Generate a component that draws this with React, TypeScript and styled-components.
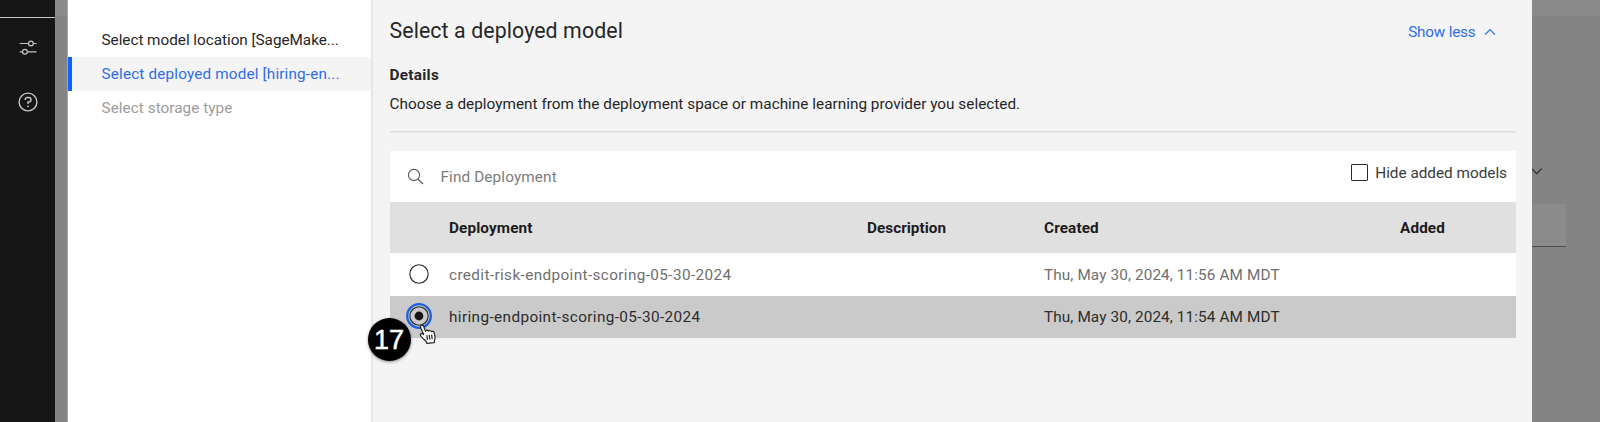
import React from "react";
import styled, { createGlobalStyle } from "styled-components";

const GlobalStyle = createGlobalStyle`
  *, *::before, *::after { box-sizing: border-box; }
  body {
    margin: 0;
    overflow: hidden;
    background: #848484;
    color: #262626;
    font-family: Roboto, "Noto Sans", sans-serif;
    font-size: 15.3px;
    line-height: 20px;
  }
  svg { display: block; }
`;

const Page = styled.div`
  display: flex;
  width: 1600px;
  height: 422px;
  overflow: hidden;
`;

const Rail = styled.nav`
  width: 55px;
  flex: none;
  display: flex;
  flex-direction: column;
  align-items: center;
  background: #161616;
  padding-left: 1px;
`;

const RailRule = styled.div`
  width: 55px;
  height: 1px;
  margin: 17px 0 20px -1px;
  background: #c6c6c6;
`;

const RailButton = styled.div<{ $gap?: number }>`
  width: 20px;
  height: 20px;
  margin-bottom: ${(p) => p.$gap ?? 0}px;
`;

const Backdrop = styled.div`
  flex: 1;
  display: flex;
  padding-left: 12px;
  background: linear-gradient(#8a8a8a 16px, #848484 16px);
`;

const Modal = styled.main`
  width: 1465px;
  flex: none;
  display: flex;
  background: #f4f4f4;
  border-left: 1px solid #a9a9a9;
`;

const Steps = styled.aside`
  width: 305px;
  flex: none;
  padding-top: 23px;
  background: #fff;
  border-right: 2px solid #e6e6e6;
`;

const Step = styled.div<{ $state: "done" | "active" | "pending"; $track: number }>`
  height: 34px;
  padding-left: 29.5px;
  border-left: 4px solid ${(p) => (p.$state === "active" ? "#0f62fe" : "transparent")};
  background: ${(p) => (p.$state === "active" ? "#f4f4f4" : "transparent")};
  color: ${(p) => ({ done: "#262626", active: "#2f6ee6", pending: "#9c9c9c" })[p.$state]};
  line-height: 35px;
  letter-spacing: ${(p) => p.$track}px;
  white-space: nowrap;
`;

const Content = styled.section`
  flex: 1;
  display: flex;
  flex-direction: column;
  padding: 15px 16.5px 0 16.5px;
`;

const TitleBar = styled.header`
  display: flex;
  justify-content: space-between;
  height: 50px;
`;

const Title = styled.h1`
  margin: 0;
  font-size: 21.3px;
  font-weight: 400;
  line-height: 31px;
  letter-spacing: 0.11px;
`;

const ShowLess = styled.div`
  display: flex;
  align-items: center;
  gap: 8px;
  height: 34px;
  padding-right: 20px;
  color: #2f6ee6;
  letter-spacing: -0.2px;
`;

const DetailsHeading = styled.h2`
  margin: 0;
  font-size: 15.3px;
  font-weight: 700;
  line-height: 21px;
  letter-spacing: 0.3px;
`;

const Details = styled.p`
  margin: 7px 0 0;
  line-height: 22px;
  letter-spacing: 0.025px;
`;

const Divider = styled.hr`
  width: 100%;
  height: 2px;
  margin: 16px 0 18px;
  border: 0;
  background: linear-gradient(#dcdcdc 50%, #e9e9e9 50%);
`;

const Toolbar = styled.div`
  display: flex;
  justify-content: space-between;
  height: 51px;
  padding: 0 8.5px 0 17px;
  background: #fff;
`;

const Search = styled.div`
  display: flex;
  align-items: center;
  gap: 17px;
  color: #7c7c7c;
  letter-spacing: 0.13px;
`;

const HideAdded = styled.label`
  display: flex;
  align-items: center;
  gap: 7px;
  height: 43px;
  color: #3a3a3a;
`;

const CheckBox = styled.span`
  width: 17px;
  height: 17px;
  border: 1px solid #2b2b2b;
  border-radius: 1px;
`;

const Row = styled.div<{ $tone: "head" | "plain" | "selected" }>`
  display: grid;
  grid-template-columns: 59.5px 418px 177px 356px 1fr;
  align-items: center;
  height: ${(p) => (p.$tone === "head" ? 51 : 42.5)}px;
  padding-top: ${(p) => (p.$tone === "head" ? 0 : 1)}px;
  background: ${(p) => ({ head: "#e0e0e0", plain: "#fff", selected: "#cacaca" })[p.$tone]};
  color: ${(p) => ({ head: "#1c1c1c", plain: "#6f6f6f", selected: "#2c2c2c" })[p.$tone]};
  font-weight: ${(p) => (p.$tone === "head" ? 700 : 400)};
`;

const Cell = styled.span<{ $track?: number }>`
  letter-spacing: ${(p) => p.$track ?? 0.12}px;
  white-space: nowrap;
`;

const RadioCell = styled.span`
  position: relative;
  padding-left: 15.5px;
`;

const Radio = styled.svg`
  margin-top: -2px;
`;

const Pointer = styled.svg`
  position: absolute;
  left: 28px;
  top: 20px;
`;

const Callout = styled.div`
  position: absolute;
  left: -22px;
  top: 13.5px;
  width: 43px;
  height: 43px;
  border-radius: 50%;
  background: #000;
  box-shadow: 0 1px 3px rgba(0, 0, 0, 0.45);
  color: #fff;
  font: 27px/44px "Liberation Sans", sans-serif;
  -webkit-text-stroke: 0.5px #fff;
  text-align: center;
`;

const Behind = styled.div`
  flex: 1;
  padding-top: 167px;
  overflow: hidden;
`;

const BehindField = styled.div`
  width: 34px;
  height: 43px;
  margin-top: 28px;
  background: #8b8b8b;
  border-bottom: 1px solid #4c4c4c;
`;

function RadioMark({ checked }: { checked?: boolean }) {
  return (
    <Radio width="28" height="28" viewBox="0 0 28 28" fill="none">
      {checked && <circle cx="14" cy="14" r="11.8" stroke="#1b5fe4" strokeWidth="2.3" />}
      <circle cx="14" cy="14" r="9.2" stroke="#262626" strokeWidth="1.1" />
      {checked && <circle cx="14" cy="14" r="4.4" fill="#161616" />}
    </Radio>
  );
}

function HandPointer() {
  return (
    <Pointer width="20" height="21" viewBox="0 0 20 21">
      <path
        d="M3 1.6c1-.7 2.2-.3 2.7.8L7.5 7.2c.4-1.3 2.4-1.4 2.9 0 .7-1.1 2.5-.9 2.9.5.9-.8 2.5-.4 2.8.9l.9 3.8c.4 1.8-.1 3-.5 4.1l-.3 2.2-7.4.6-.7-1.9c-1.4-1.5-2.9-2.5-4.3-4.3-.8-1.1-2-2-1.4-3 .6-1 2.2-.6 3.3.5L2.6 3.6c-.3-.8-.2-1.5.4-2z"
        fill="#fff"
        stroke="#222"
        strokeWidth="1.2"
        strokeLinejoin="round"
      />
      <path d="M8.8 11.2l.7 4.6M11.2 10.9l.7 4.6M13.6 10.6l.6 4.5" stroke="#222" strokeWidth="1.2" />
    </Pointer>
  );
}

export default function App() {
  return (
    <>
      <GlobalStyle />
      <Page>
        <Rail>
          <RailRule />
          <RailButton $gap={33.5}>
            <svg width="20" height="20" viewBox="0 0 20 20" fill="none" stroke="#c6c6c6" strokeWidth="1.2">
              <path d="M1.7 5.5H10.3M15.5 5.5H18.5M1.7 13.8H4.3M9.5 13.8H18.5" />
              <circle cx="12.9" cy="5.5" r="2.4" />
              <circle cx="6.9" cy="13.8" r="2.4" />
            </svg>
          </RailButton>
          <RailButton>
            <svg width="20" height="20" viewBox="0 0 20 20" fill="none" stroke="#c6c6c6" strokeWidth="1.4">
              <circle cx="10" cy="10" r="8.9" />
              <path d="M7.2 8V7.6a2.1 2.1 0 0 1 2.1-2.1h1.5a2.2 2.2 0 0 1 0 4.4H10v2" />
              <circle cx="10" cy="14.3" r=".9" fill="#c6c6c6" stroke="none" />
            </svg>
          </RailButton>
        </Rail>
        <Backdrop>
          <Modal>
            <Steps>
              <Step $state="done" $track={-0.03}>Select model location [SageMake...</Step>
              <Step $state="active" $track={0.16}>Select deployed model [hiring-en...</Step>
              <Step $state="pending" $track={0.05}>Select storage type</Step>
            </Steps>
            <Content>
              <TitleBar>
                <Title>Select a deployed model</Title>
                <ShowLess>
                  Show less
                  <svg width="12" height="8" viewBox="0 0 12 8" fill="none" stroke="#2f6ee6" strokeWidth="1.3">
                    <path d="M1 6.6L6 1.6L11 6.6" />
                  </svg>
                </ShowLess>
              </TitleBar>
              <DetailsHeading>Details</DetailsHeading>
              <Details>
                Choose a deployment from the deployment space or machine learning provider you selected.
              </Details>
              <Divider />
              <Toolbar>
                <Search>
                  <svg width="17" height="17" viewBox="0 0 17 17" fill="none" stroke="#555" strokeWidth="1.1">
                    <circle cx="7" cy="7" r="5.6" />
                    <path d="M11 11L16 16" />
                  </svg>
                  Find Deployment
                </Search>
                <HideAdded>
                  <CheckBox />
                  Hide added models
                </HideAdded>
              </Toolbar>
              <Row $tone="head">
                <span />
                <Cell>Deployment</Cell>
                <Cell $track={0.03}>Description</Cell>
                <Cell>Created</Cell>
                <Cell>Added</Cell>
              </Row>
              <Row $tone="plain">
                <RadioCell>
                  <RadioMark />
                </RadioCell>
                <Cell $track={0.385}>credit-risk-endpoint-scoring-05-30-2024</Cell>
                <span />
                <Cell>Thu, May 30, 2024, 11:56 AM MDT</Cell>
              </Row>
              <Row $tone="selected">
                <RadioCell>
                  <RadioMark checked />
                  <Callout>17</Callout>
                  <HandPointer />
                </RadioCell>
                <Cell $track={0.39}>hiring-endpoint-scoring-05-30-2024</Cell>
                <span />
                <Cell>Thu, May 30, 2024, 11:54 AM MDT</Cell>
              </Row>
            </Content>
          </Modal>
          <Behind>
            <svg width="12" height="9" viewBox="0 0 12 9" fill="none" stroke="#2c2c2c" strokeWidth="1.2">
              <path d="M0 2L4.7 6.7L9.6 1.6" />
            </svg>
            <BehindField />
          </Behind>
        </Backdrop>
      </Page>
    </>
  );
}
